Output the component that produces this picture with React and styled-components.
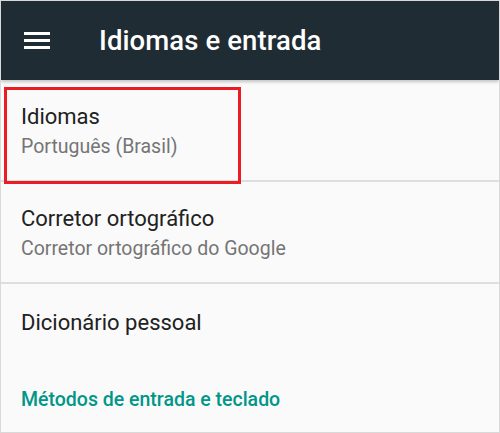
import React from 'react'
import styled, { createGlobalStyle } from 'styled-components'

const items = [
  { title: 'Idiomas', summary: 'Português (Brasil)', marked: true },
  { title: 'Corretor ortográfico', summary: 'Corretor ortográfico do Google' },
  { title: 'Dicionário pessoal' },
]

function App() {
  return (
    <>
      <GlobalStyle />
      <Frame>
        <Toolbar>
          <MenuButton aria-label="menu">
            <Bar />
            <Bar />
            <Bar />
          </MenuButton>
          <ToolbarTitle>Idiomas e entrada</ToolbarTitle>
        </Toolbar>
        <List>
          {items.map((item) => (
            <Row key={item.title} single={!item.summary} divider={!!item.summary}>
              <RowTitle>{item.title}</RowTitle>
              {item.summary && <RowSummary>{item.summary}</RowSummary>}
              {item.marked && <Highlight />}
            </Row>
          ))}
          <Category>Métodos de entrada e teclado</Category>
        </List>
      </Frame>
    </>
  )
}

export default App

const GlobalStyle = createGlobalStyle`
  html, body {
    margin: 0;
    padding: 0;
    background: #fafafa;
  }
  body {
    font-family: Roboto, "Noto Sans", "Liberation Sans", sans-serif;
  }
`
const Frame = styled.div`
  width: 500px;
  height: 433px;
  box-sizing: border-box;
  border: 1px solid #d9d9d9;
  background: #fafafa;
  display: flex;
  flex-direction: column;
  overflow: hidden;
`
const Toolbar = styled.div`
  height: 79px;
  flex-shrink: 0;
  background: #1f2c34;
  display: flex;
  align-items: center;
  padding-left: 23px;
  box-shadow: 0 2px 3px rgba(0, 0, 0, 0.22);
  position: relative;
  z-index: 1;
`
const MenuButton = styled.div`
  width: 26px;
  display: flex;
  flex-direction: column;
  gap: 4px;
  margin-right: 49px;
`
const Bar = styled.span`
  display: block;
  height: 3px;
  background: #ffffff;
`
const ToolbarTitle = styled.h1`
  margin: 0;
  color: #ffffff;
  font-size: 27.5px;
  font-weight: 500;
  letter-spacing: 0.1px;
`
const List = styled.div`
  display: flex;
  flex-direction: column;
`
const Row = styled.div`
  position: relative;
  height: ${(p) => (p.single ? '75px' : '102px')};
  padding: 3px 20px 0;
  display: flex;
  flex-direction: column;
  justify-content: center;
  border-bottom: ${(p) => (p.divider ? '2px solid #dedede' : 'none')};
  box-sizing: border-box;
`
const RowTitle = styled.div`
  font-size: 22px;
  line-height: 28px;
  color: #212121;
`
const RowSummary = styled.div`
  margin-top: 2px;
  font-size: 19.5px;
  line-height: 27px;
  color: #757575;
`
const Highlight = styled.div`
  position: absolute;
  left: 3px;
  top: 7px;
  width: 237px;
  height: 97px;
  box-sizing: border-box;
  border: 3px solid #ec1c24;
`
const Category = styled.div`
  padding: 28px 20px 0;
  font-size: 19.5px;
  line-height: 26px;
  font-weight: 500;
  color: #009688;
`
